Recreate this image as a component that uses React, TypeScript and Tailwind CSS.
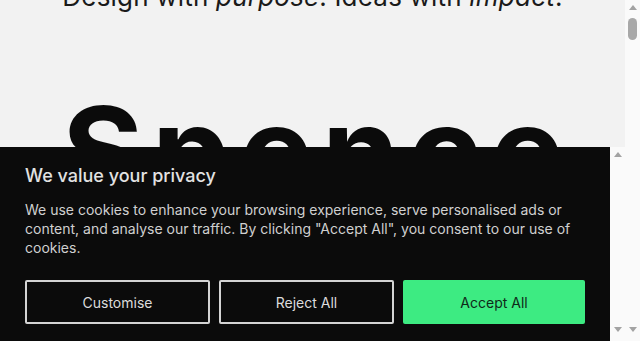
import React from "react";

function Arrow({ dir }: { dir: "up" | "down" }) {
  return (
    <svg width="8" height="5" viewBox="0 0 8 5" className="block">
      {dir === "up" ? (
        <polygon points="0,5 8,5 4,0" fill="#a3a3a3" />
      ) : (
        <polygon points="0,0 8,0 4,5" fill="#a3a3a3" />
      )}
    </svg>
  );
}

function ScrollTrack({ thumb }: { thumb?: boolean }) {
  return (
    <div className="flex h-full w-[15px] flex-col items-center bg-[#fafafa] pt-[5px] pb-[9px]">
      <Arrow dir="up" />
      {thumb ? (
        <div className="mt-[8px] h-[22px] w-[9px] rounded-full bg-[#a8a8a8]" />
      ) : null}
      <div className="flex-1" />
      <Arrow dir="down" />
    </div>
  );
}

export default function App() {
  return (
    <div
      className="relative flex h-[341px] w-[640px] overflow-hidden bg-[#f2f2f2]"
      style={{ fontFamily: "Inter, 'Noto Sans', sans-serif" }}
    >
      <main className="flex flex-1 flex-col items-center text-[#111]">
        <h2 className="mt-[-19px] text-[26px] leading-[32px] font-normal tracking-[0.2px] text-[#1a1a1a]">
          Design with <em className="italic">purpose</em>. Ideas with{" "}
          <em className="italic">impact</em>.
        </h2>
        <h1 className="mt-[76px] pl-[10px] text-[124px] leading-none font-bold tracking-[9px] text-[#0b0b0b]">
          Spence
        </h1>
      </main>
      <ScrollTrack thumb />

      <div className="fixed bottom-0 left-0 flex h-[194px] w-[625px]">
        <div className="flex flex-1 flex-col bg-[#0b0b0b] px-[25px] pt-[17px]">
          <h3 className="text-[18px] leading-[24px] font-medium text-[#e2e2e2]">
            We value your privacy
          </h3>
          <p className="mt-[12px] text-[14px] leading-[19px] text-[#d0d0d0]">
            We use cookies to enhance your browsing experience, serve personalised ads or
            content, and analyse our traffic. By clicking "Accept All", you consent to our use of
            cookies.
          </p>
          <div className="mt-[23px] flex gap-[9px]">
            <button className="h-[44px] w-[185px] rounded-[2px] border-2 border-[#d4d4d4] text-[14px] text-[#dcdcdc]">
              Customise
            </button>
            <button className="h-[44px] w-[175px] rounded-[2px] border-2 border-[#d4d4d4] text-[14px] text-[#dcdcdc]">
              Reject All
            </button>
            <button className="h-[44px] w-[182px] rounded-[2px] bg-[#3deb82] text-[14px] text-[#0f2a19]">
              Accept All
            </button>
          </div>
        </div>
        <ScrollTrack />
      </div>
    </div>
  );
}
